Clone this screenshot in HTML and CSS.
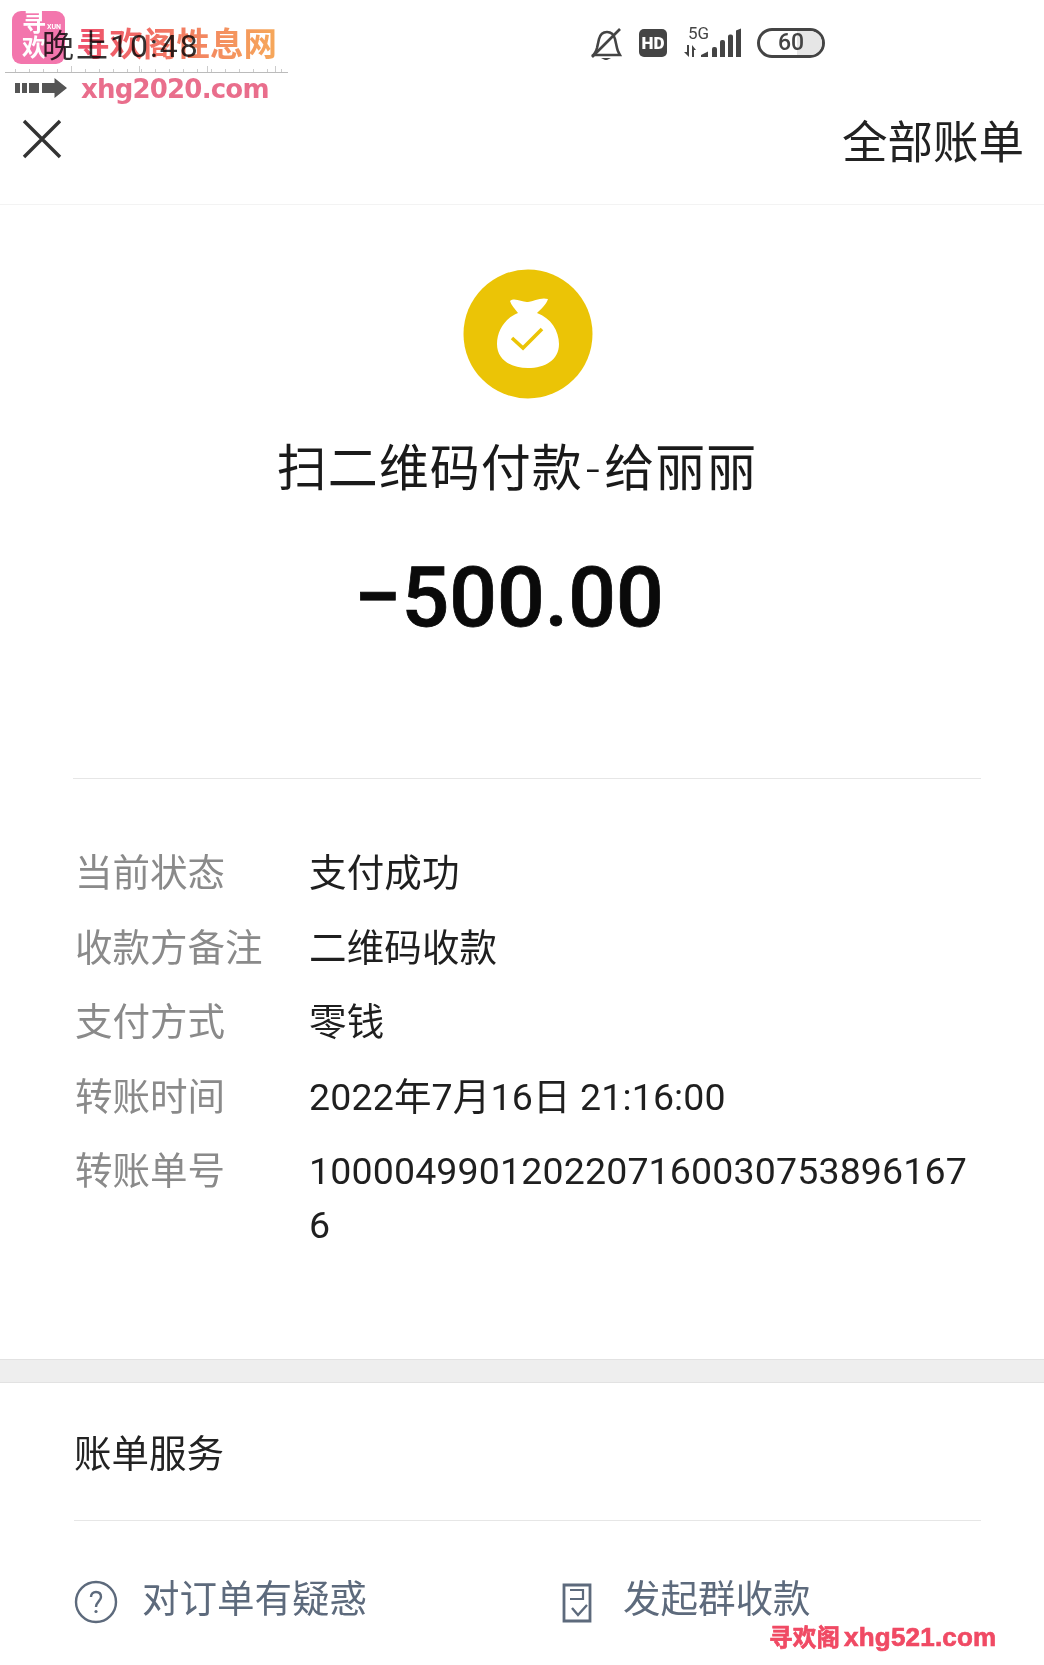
FILE: index.html
```html
<!DOCTYPE html>
<html lang="zh-CN">
<head>
    <meta charset="UTF-8">
    <title>账单详情</title>
    <link rel="stylesheet" href="styles.css">
</head>
<body>
    <div class="page">
        <div class="status">
            <span class="clock">晚上10:48</span>
            <div class="status-icons">
                <svg class="bell" width="34" height="34" viewBox="0 0 34 34">
                    <path d="M3 30c3-2 4-4 5-8l2-9c1-4 4-7 8-7s7 3 8 7l2 9c.5 3 2 5 3 7H4" fill="none" stroke="#444" stroke-width="2.6"/>
                    <path d="M3 31L31 3" stroke="#444" stroke-width="2.6"/>
                    <path d="M12 32h10l-5 2.5z" fill="#444"/>
                </svg>
                <span class="hd">HD</span>
                <div class="signal">
                    <span class="five-g">5G</span>
                    <svg width="58" height="30" viewBox="0 0 58 30">
                        <path d="M3 17h2v12L0 24h3zM8 17l4 5h-2v7H8z" fill="#444"/>
                        <path d="M17 29v-2l7-3.500V29zM28 21q0-2 2-2h1q2 0 2 2v8h-5zM36 14q0-2 2-2h1q2 0 2 2v15h-5zM44 8.500q0-2 2-2h1q2 0 2 2V29h-5zM52 2.500l5-2V29h-5z" fill="#444"/>
                    </svg>
                </div>
                <div class="battery"><span class="battery-level"></span><span class="battery-text">60</span></div>
            </div>
        </div>

        <div class="nav">
            <svg class="close" width="40" height="40" viewBox="0 0 40 40">
                <path d="M2 2L38 38M38 2L2 38" stroke="#333" stroke-width="3.400"/>
            </svg>
            <span class="nav-link">全部账单</span>
        </div>

        <div class="summary">
            <svg class="coin" width="130" height="130" viewBox="0 0 130 130">
                <circle cx="65" cy="65" r="64.500" fill="#ebc406"/>
                <path d="M47 32C52 28 60 34 65 33C71 32 78 28 85 30C83 36 78 40 74 44C88 49 96 62 96 75C96 91 82 99 65 99C48 99 34 91 34 75C34 62 42 49 55 44C52 40 48 36 47 32z" fill="#fff"/>
                <path d="M49 69L60 79L79 60" fill="none" stroke="#ebc406" stroke-width="3.600"/>
            </svg>
            <div class="title">扫二维码付款<span class="dash">-</span>给丽丽</div>
            <div class="amount">−500.00</div>
        </div>

        <div class="details">
            <div class="row"><span class="label">当前状态</span><span class="value">支付成功</span></div>
            <div class="row"><span class="label">收款方备注</span><span class="value">二维码收款</span></div>
            <div class="row"><span class="label">支付方式</span><span class="value">零钱</span></div>
            <div class="row"><span class="label">转账时间</span><span class="value">2022年7月16日 21:16:00</span></div>
            <div class="row"><span class="label">转账单号</span><span class="value">10000499012022071600307538961676</span></div>
        </div>

        <div class="band"></div>

        <div class="services">
            <div class="services-title">账单服务</div>
            <div class="service-list">
                <div class="service">
                    <svg width="44" height="44" viewBox="0 0 44 44">
                        <circle cx="22" cy="22" r="20" fill="none" stroke="#5d6a7c" stroke-width="2.400"/>
                        <path d="M17 17c0-3 2-5 5-5s5 2 5 5c0 4-5 5-5 10" fill="none" stroke="#5d6a7c" stroke-width="2.400"/>
                        <circle cx="22" cy="31.500" r="1.600" fill="#5d6a7c"/>
                    </svg>
                    <span>对订单有疑惑</span>
                </div>
                <div class="service">
                    <svg width="44" height="44" viewBox="0 0 44 44">
                        <path d="M9 5h26v36H9z" fill="none" stroke="#5d6a7c" stroke-width="2.800"/>
                        <path d="M15 10h13v9H15" fill="none" stroke="#5d6a7c" stroke-width="2.200"/>
                        <path d="M17 28l6 7 9-10" fill="none" stroke="#5d6a7c" stroke-width="2.400"/>
                    </svg>
                    <span>发起群收款</span>
                </div>
            </div>
        </div>

        <!-- watermarks sit over the page -->
        <div class="mark-top">
            <div class="mark-logo">寻欢<small>XUN</small></div>
            <div class="mark-name">寻欢阁性息网</div>
            <div class="mark-rule"></div>
            <div class="mark-arrow"><i></i><i></i><i class="wide"></i><b></b></div>
            <div class="mark-url">xhg2020.com</div>
        </div>
        <div class="mark-bottom"><span class="mark-cn">寻欢阁</span>xhg521.com</div>
    </div>
</body>
</html>
```

FILE: styles.css
```css
* {
    margin: 0;
    padding: 0;
    box-sizing: border-box;
}
html, body {
    height: 100%;
}
body {
    font-family: Roboto, "Noto Sans CJK SC", sans-serif;
    background-color: #fff;
    color: #1a1a1a;
    overflow: hidden;
}
.page {
    position: relative;
    width: 1044px;
    height: 1665px;
    overflow: hidden;
}
.status {
    height: 86px;
    display: flex;
    align-items: center;
    justify-content: space-between;
    padding: 0 219px 0 42px;
}
.clock {
    font-size: 32px;
    color: #333;
    letter-spacing: 2px;
}
.status-icons {
    display: flex;
    align-items: center;
}
.bell {
    margin-right: 16px;
}
.hd {
    width: 28px;
    height: 28px;
    border-radius: 5px;
    background-color: #444;
    color: #fff;
    font-size: 17px;
    font-weight: 900;
    text-align: center;
    line-height: 28px;
    margin-right: 17px;
}
.signal {
    position: relative;
    width: 58px;
    height: 30px;
    margin-right: 15px;
}
.five-g {
    position: absolute;
    left: 4px;
    top: -5px;
    font-size: 17px;
    line-height: 20px;
    color: #444;
}
.battery {
    position: relative;
    width: 68px;
    height: 30px;
    border: 3px solid #444;
    border-radius: 15px;
    overflow: hidden;
    text-align: center;
}
.battery-level {
    position: absolute;
    right: 0;
    top: 0;
    bottom: 0;
    width: 40%;
    background-color: #e6e6e6;
}
.battery-text {
    position: relative;
    font-size: 23px;
    font-weight: 500;
    line-height: 24px;
    color: #444;
}
.nav {
    height: 119px;
    display: flex;
    align-items: center;
    justify-content: space-between;
    padding: 0 20px 12px 22px;
    border-bottom: 1px solid #f3f3f3;
}
.nav-link {
    font-size: 45.500px;
    color: #222;
}
.summary {
    display: flex;
    flex-direction: column;
    align-items: center;
    padding-top: 64px;
    height: 574px;
    margin: 0 63px 0 73px;
    border-bottom: 1px solid #e6e6e6;
}
.coin {
    margin-left: 2px;
}
.title {
    margin-top: 37px;
    margin-right: 20px;
    font-size: 50px;
    line-height: 66px;
    letter-spacing: 1px;
    color: #1a1a1a;
}
.dash {
    margin: 0 3px;
    font-weight: 300;
}
.amount {
    margin-top: 44px;
    margin-right: 36px;
    font-size: 84px;
    line-height: 104px;
    font-weight: 500;
    color: #0a0a0a;
    -webkit-text-stroke: .8px #0a0a0a;
    white-space: nowrap;
}
.details {
    padding: 67px 63px 0 75px;
    height: 580px;
}
.row {
    display: flex;
    font-size: 37.500px;
    line-height: 54px;
    margin-bottom: 20.600px;
}
.label {
    width: 234px;
    flex-shrink: 0;
    color: #8a8a8a;
}
.value {
    word-break: break-all;
    color: #1f1f1f;
    width: 673px;
    letter-spacing: .15px;
}
.band {
    height: 24px;
    background-color: #eeeeee;
    border-top: 1px solid #e2e2e2;
    border-bottom: 1px solid #e2e2e2;
}
.services {
    padding: 0 63px 0 74px;
}
.services-title {
    height: 138px;
    line-height: 142px;
    font-size: 37.500px;
    color: #222;
    border-bottom: 1px solid #e6e6e6;
}
.service-list {
    display: flex;
    padding-top: 53px;
}
.service {
    flex: 0 0 481px;
    display: flex;
    align-items: flex-start;
    gap: 24px;
    font-size: 37.500px;
    line-height: 50px;
    color: #5d6a7c;
}
.service svg {
    margin-top: 6px;
}
/* watermarks */
.mark-top {
    position: absolute;
    left: 0;
    top: 0;
    width: 300px;
    height: 110px;
}
.mark-logo {
    position: absolute;
    left: 12px;
    top: 11px;
    width: 53px;
    height: 53px;
    border-radius: 9px;
    background-color: #f376ad;
    color: #fff;
    font-size: 24px;
    line-height: 25px;
    padding-left: 10px;
    font-weight: 700;
    mix-blend-mode: multiply;
}
.mark-logo small {
    position: absolute;
    right: 4px;
    top: 12px;
    font-size: 7px;
    line-height: 8px;
}
.mark-name {
    position: absolute;
    left: 76px;
    top: 20px;
    font-family: "Noto Sans CJK SC", sans-serif;
    font-size: 33.500px;
    line-height: 44px;
    font-weight: 700;
    white-space: nowrap;
    background: linear-gradient(90deg, #ee4f6c, #f6a85a);
    -webkit-background-clip: text;
    background-clip: text;
    color: transparent;
    mix-blend-mode: multiply;
}
.mark-rule {
    position: absolute;
    left: 5px;
    top: 66px;
    width: 283px;
    height: 7px;
    border-bottom: 1px solid #bbb;
    background-image: repeating-linear-gradient(90deg, #ccc 0 1px, transparent 1px 68px),
                      repeating-linear-gradient(90deg, #ccc 0 1px, transparent 1px 14px);
    background-size: 100% 6px, 100% 3px;
    background-position: 66px 0, 10px 3px;
    background-repeat: no-repeat;
}
.mark-arrow {
    position: absolute;
    left: 15px;
    top: 78px;
    display: flex;
    align-items: center;
    gap: 2px;
    height: 20px;
}
.mark-arrow i {
    width: 5px;
    height: 10px;
    background-color: #555;
}
.mark-arrow i.wide {
    width: 10px;
}
.mark-arrow b {
    margin-left: 1px;
    width: 25px;
    height: 20px;
    background-color: #555;
    clip-path: polygon(0 25%, 50% 25%, 50% 0, 100% 50%, 50% 100%, 50% 75%, 0 75%);
}
.mark-url {
    position: absolute;
    left: 81px;
    top: 71px;
    font-family: "DejaVu Sans", sans-serif;
    font-size: 26px;
    line-height: 36px;
    font-weight: 700;
    color: #e96e8c;
    letter-spacing: -.8px;
}
.mark-bottom {
    position: absolute;
    left: 769px;
    top: 1619px;
    font-family: "Liberation Sans", "Noto Sans CJK SC", sans-serif;
    font-size: 26px;
    line-height: 36px;
    font-weight: 700;
    color: #f04a64;
    -webkit-text-stroke: .7px #f04a64;
    letter-spacing: .2px;
    white-space: nowrap;
}
.mark-cn {
    font-size: 23.500px;
    margin-right: 4px;
}
```
